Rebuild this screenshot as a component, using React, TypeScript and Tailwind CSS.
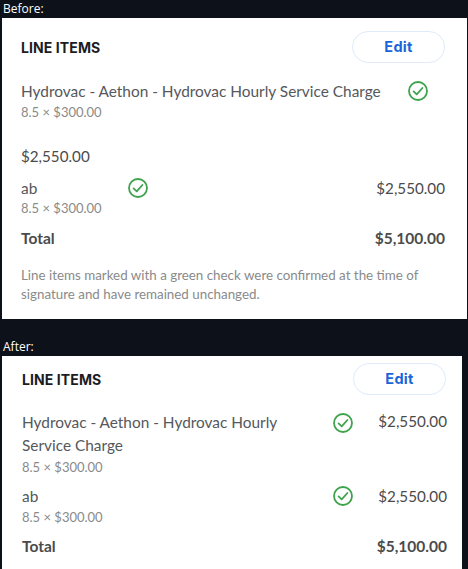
import React from "react";

const CheckIcon: React.FC = () => (
  <svg width="20" height="20" viewBox="0 0 20 20" fill="none" className="shrink-0 block">
    <circle cx="10" cy="10" r="9" stroke="#3fa34d" strokeWidth="1.8" />
    <path d="M5.6 10.4 L8.7 13.4 L14.4 7" stroke="#3fa34d" strokeWidth="1.8" strokeLinecap="round" strokeLinejoin="round" />
  </svg>
);

const Header: React.FC = () => (
  <div className="flex items-center justify-between">
    <span className="font-['Inter',sans-serif] text-[14px] font-bold tracking-[0.1px] text-[#1c1c1f]">LINE ITEMS</span>
    <button className="w-[93px] h-[32px] rounded-full border border-[#dfeafb] bg-white font-['Inter',sans-serif] text-[14.5px] font-bold tracking-[0.3px] text-[#1a66d9]">
      Edit
    </button>
  </div>
);

const Sub: React.FC = () => <div className="text-[13px] leading-[20px] text-[#8a8a8a]">8.5 × $300.00</div>;

const TotalRow: React.FC = () => (
  <div className="flex justify-between text-[15.5px] leading-[20px] font-bold text-[#4b4b4b]">
    <span>Total</span>
    <span>$5,100.00</span>
  </div>
);

export default function App() {
  return (
    <div className="h-[569px] w-[468px] overflow-hidden bg-[#0d1119] font-['Lato',sans-serif]">
      <div className="h-[18px] pl-[3px] text-[12px] leading-[18px] text-white font-['Open_Sans',sans-serif]">Before:</div>
      <div className="ml-[2px] h-[301px] w-[465px] bg-white pl-[19px] pr-[22px] pt-[13px]">
        <Header />
        <div className="mt-[18px] flex items-center pr-[17px]">
          <span className="text-[15.4px] leading-[20px] text-[#55585c]">Hydrovac - Aethon - Hydrovac Hourly Service Charge</span>
          <span className="ml-auto"><CheckIcon /></span>
        </div>
        <div className="mt-[1px]"><Sub /></div>
        <div className="mt-[24px] text-[15.2px] leading-[20px] text-[#4b4b4b]">$2,550.00</div>
        <div className="mt-[12px] flex items-center justify-between">
          <div className="flex w-[127px] items-center justify-between">
            <span className="text-[15.4px] leading-[20px] text-[#55585c]">ab</span>
            <CheckIcon />
          </div>
          <span className="text-[15.2px] leading-[20px] text-[#4b4b4b]">$2,550.00</span>
        </div>
        <Sub />
        <div className="mt-[10px]"><TotalRow /></div>
        <p className="mt-[18px] text-[13.36px] leading-[19px] text-[#8a8a8a]">
          Line items marked with a green check were confirmed at the time of signature and have remained unchanged.
        </p>
      </div>
      <div className="h-[37px] pl-[3px] pt-[19px] text-[12px] leading-[18px] text-white font-['Open_Sans',sans-serif]">After:</div>
      <div className="ml-[2px] h-[213px] w-[460px] bg-white pl-[20px] pr-[15px] pt-[7px]">
        <div className="mr-[1px]"><Header /></div>
        <div className="mt-[16px] flex items-start">
          <div className="w-[270px]">
            <div className="text-[15.4px] leading-[23px] text-[#55585c]">Hydrovac - Aethon - Hydrovac Hourly Service Charge</div>
            <Sub />
          </div>
          <span className="ml-auto mt-[2px]"><CheckIcon /></span>
          <span className="ml-[25px] text-[15.2px] leading-[20px] text-[#4b4b4b]">$2,550.00</span>
        </div>
        <div className="mt-[9px] flex items-start">
          <div>
            <div className="text-[15.4px] leading-[20px] text-[#55585c]">ab</div>
            <div className="mt-[1px]"><Sub /></div>
          </div>
          <span className="ml-auto"><CheckIcon /></span>
          <span className="ml-[25px] text-[15.2px] leading-[20px] text-[#4b4b4b]">$2,550.00</span>
        </div>
        <div className="mt-[9px]"><TotalRow /></div>
      </div>
    </div>
  );
}
